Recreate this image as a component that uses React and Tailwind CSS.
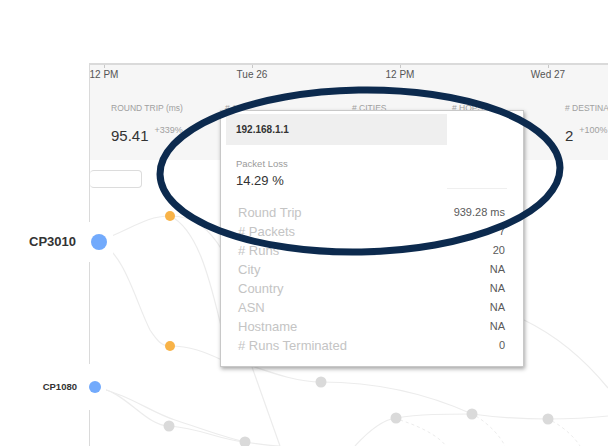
import React from "react";

const ticks = ["12 PM", "Tue 26", "12 PM", "Wed 27"];

const stats = [
  { label: "ROUND TRIP (ms)", value: "95.41", delta: "+339%", w: "w-[114px]" },
  { label: "# AS", value: "3", delta: "+50%", w: "w-[127px]" },
  { label: "# CITIES", value: "2", delta: "+0%", w: "w-[100px]" },
  { label: "# HOPS", value: "9", delta: "+12%", w: "w-[113px]" },
  { label: "# DESTINATIONS", value: "2", delta: "+100%", w: "w-[120px]" },
];

const rows = [
  ["Round Trip", "939.28 ms"],
  ["# Packets", "7"],
  ["# Runs", "20"],
  ["City", "NA"],
  ["Country", "NA"],
  ["ASN", "NA"],
  ["Hostname", "NA"],
  ["# Runs Terminated", "0"],
];

const grayNodes = [
  [321, 382],
  [396, 418],
  [472, 414],
  [548, 419],
  [169, 426],
  [245, 442],
];

function Graph() {
  return (
    <svg className="absolute left-0 top-0" width="608" height="446" fill="none">
      <g stroke="#ececec" strokeWidth="1.2">
        <path d="M99 241 C130 230,145 216,170 216" />
        <path d="M170 216 C195 216,210 230,222 250" />
        <path d="M170 216 C200 230,212 290,222 330" />
        <path d="M99 241 C125 255,135 300,150 330 C158 342,162 346,170 346" />
        <path d="M170 346 C190 346,205 352,222 360" />
        <path d="M240 362 C270 372,295 382,321 382" />
        <path d="M321 382 C380 382,430 395,472 414 C500 418,530 419,548 419 C570 419,590 418,608 416" />
        <path d="M396 418 C420 414,445 414,472 414" />
        <path d="M396 418 C380 420,365 435,355 446" />
        <path d="M252 367 L280 446" />
        <path d="M95 387 C125 390,145 426,169 426" />
        <path d="M95 387 C130 395,150 412,175 420 C200 428,220 436,245 442" />
        <path d="M169 426 C200 428,220 440,245 442 C260 444,270 446,280 446" />
        <path d="M524 320 C555 335,585 360,608 388" />
      </g>
      <g stroke="#ececec" strokeWidth="1" strokeDasharray="3 3">
        <path d="M400 420 C425 428,440 438,446 446" />
        <path d="M476 416 C490 425,500 436,505 446" />
        <path d="M552 421 C565 428,575 438,580 446" />
      </g>
      {grayNodes.map(([x, y], i) => (
        <circle key={i} cx={x} cy={y} r="5.5" fill="#dadada" />
      ))}
      <circle cx="170" cy="216" r="5" fill="#f8b348" />
      <circle cx="170" cy="346" r="5" fill="#f8b348" />
    </svg>
  );
}

export default function App() {
  return (
    <div className="relative h-[446px] w-[608px] overflow-hidden bg-white font-['Liberation_Sans',Arial,sans-serif]">
      <div className="ml-[89px] mt-[63px] h-[383px] overflow-hidden border-l border-t-2 border-[#dadada]">
        <div className="h-[95px] bg-[#f6f6f6]">
          <div className="ml-[-60px] flex h-[20px]">
            {ticks.map((t, i) => (
              <div key={i} className="flex w-[148px] shrink-0 flex-col items-center">
                <div className="h-[3px] w-px bg-[#c8c8c8]" />
                <div className="mt-[1px] text-[10px] leading-[12px] text-[#555]">{t}</div>
              </div>
            ))}
          </div>
          <div className="mt-[18px] flex pl-[21px]">
            {stats.map((s) => (
              <div key={s.label} className={`${s.w} shrink-0`}>
                <div className="whitespace-nowrap text-[8.5px] leading-[10px] text-[#a0a0a0]">{s.label}</div>
                <div className="mt-[14px] flex items-start whitespace-nowrap">
                  <span className="text-[15px] leading-[17px] text-[#333]">{s.value}</span>
                  <span className="ml-[6px] mt-[-2px] text-[9px] leading-[11px] text-[#a0a0a0]">{s.delta}</span>
                </div>
              </div>
            ))}
          </div>
        </div>
        <div className="mt-[10px] h-[18px] w-[52px] rounded-sm border border-l-0 border-[#dcdcdc]" />
      </div>

      <Graph />

      <div className="absolute left-0 top-[222px] flex h-[40px] w-[113px] items-center justify-end gap-[15px] bg-white pr-[6px]">
        <span className="text-[13px] font-bold text-[#333]">CP3010</span>
        <span className="h-[16px] w-[16px] rounded-full bg-[#72aafc]" />
      </div>
      <div className="absolute left-0 top-[364px] flex h-[46px] w-[106px] items-center justify-end gap-[12px] bg-white pr-[5px]">
        <span className="text-[9.5px] font-bold text-[#333]">CP1080</span>
        <span className="h-[12px] w-[12px] rounded-full bg-[#72aafc]" />
      </div>

      <div className="absolute left-[220px] top-[110px] h-[257px] w-[304px] border border-[#c8c8c8] bg-white pl-[5px] pt-[3px] shadow-[1px_2px_4px_rgba(0,0,0,0.35)]">
        <div className="flex h-[31px] w-[221px] items-center bg-[#efefef] pl-[10px] text-[10px] font-bold text-[#333]">
          192.168.1.1
        </div>
        <div className="flex">
          <div className="h-[54px] w-[221px] pl-[10px] pt-[13px]">
            <div className="text-[9.5px] leading-[11px] text-[#9a9a9a]">Packet Loss</div>
            <div className="mt-[4px] text-[13px] leading-[15px] text-[#333]">14.29 %</div>
          </div>
          <div className="h-[44px] w-[60px] border-b border-[#efefef]" />
        </div>
        <div className="mt-[4px] pl-[12px] pr-[18px]">
          {rows.map(([k, v]) => (
            <div key={k} className="flex h-[19px] items-center justify-between">
              <span className="text-[13px] text-[#c4c4c4]">{k}</span>
              <span className="text-[11px] text-[#5a5a5a]">{v}</span>
            </div>
          ))}
        </div>
      </div>

      <svg className="pointer-events-none absolute left-0 top-0" width="608" height="446" fill="none">
        <ellipse cx="360" cy="171" rx="200" ry="81" stroke="#0c2a4e" strokeWidth="7" transform="rotate(-1 360 171)" />
      </svg>
    </div>
  );
}
